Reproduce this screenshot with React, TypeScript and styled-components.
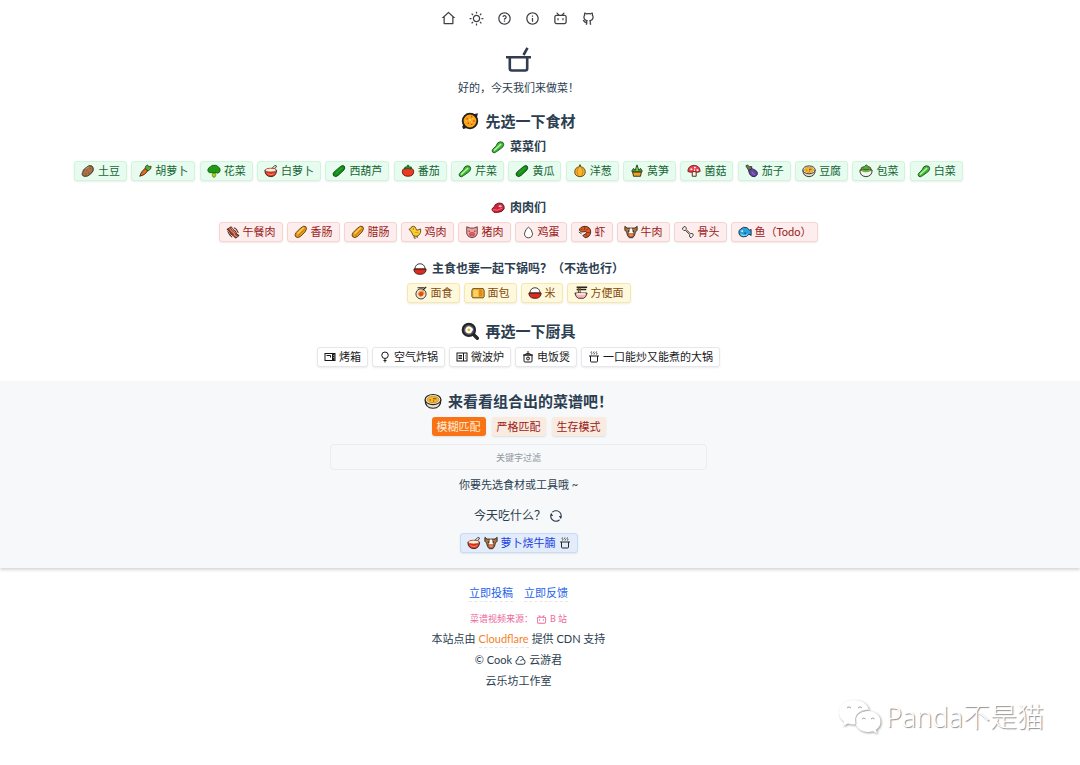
import React from 'react';
import styled, { createGlobalStyle, css } from 'styled-components';
import {
  RiHome2Line, RiSunLine, RiQuestionLine, RiInformationLine,
  RiBilibiliLine, RiGithubLine, RiRefreshLine, RiCloudLine,
} from 'react-icons/ri';

const Global = createGlobalStyle`
  * { box-sizing: border-box; }
  body {
    margin: 0;
    background: #fff;
    color: #2c3e50;
    font-family: Lato, "Noto Sans CJK SC", sans-serif;
    font-size: 11px;
    line-height: 20px;
  }
  h1, h2, p { margin: 0; }
  button, input { font: inherit; }
  svg { display: block; flex: none; }
`;

/* ---------- food drawings, 16 x 16 ---------- */
const K = '#2b2119';

const art: Record<string, React.ReactNode> = {
  potato: (<>
    <path d="M4 5.500 9 2q4-1 5 2.500t-3 7Q7 15 3.500 14T2 9.500q.3-2.300 2-4z" fill="#a9744a" stroke={K} />
    <path d="M6 7h1M10 5h1M8 10h1M5 11h1" stroke="#6b4226" />
    <path d="M5 5.500 9 3.200" stroke="#cf9c6f" />
  </>),
  carrot: (<>
    <path d="M2 14q1-5 6-9l3 3q-3 5-9 6z" fill="#f2701d" stroke={K} />
    <path d="M8 5q0-3 3-4l1 2 3-.5-.5 3-3 2.500z" fill="#4fae2b" stroke={K} strokeWidth=".8" />
    <path d="m5 9 1.500 1.500M7 7l1.500 1.500" stroke="#b94a0c" strokeWidth=".8" />
  </>),
  broccoli: (<>
    <path d="M6 9h4v4l-1 2H7l-1-2z" fill="#a8d816" stroke="#557d0c" strokeWidth=".8" />
    <path d="M3 10Q.5 9 1 6.500 1.500 4 4 3q2-2 4-1.500Q11 1 12.500 3 15 4 15 7q0 3-3 3.500l-2-1-2 1-2-1z" fill="#219b16" stroke="#11590d" />
  </>),
  bowlSpoon: (<>
    <path d="m8 6 4.500-4.500 2 1L11 7" fill="#ddd" stroke={K} strokeWidth=".9" />
    <path d="M1 7q0 7 7 7.500Q14 14 14.500 7z" fill="#e23a24" stroke={K} />
    <ellipse cx="7.700" cy="7" rx="6.200" ry="2.200" fill="#fff0d0" stroke="#8f2014" strokeWidth=".8" />
    <path d="M4 11q4 2.500 8 0" stroke="#ff8d70" fill="none" />
  </>),
  cucumber: (<>
    <path d="M2 13.500q-2-2 .5-4.500l7-6q3-2.500 4.500-.5t-.5 4.500L7 13q-3 2.500-5 .5z" fill="#129218" stroke="#133c13" />
    <path d="m4.500 10.500 7-6" stroke="#2fb82b" />
  </>),
  tomato: (<>
    <path d="M1.500 8.500Q2 4 8 4t6.500 4.500Q14.500 14 8 14T1.500 8.500z" fill="#ef391e" stroke="#52170c" />
    <path d="m8 5-4 1 .5-2.500L7 3V1.500h2V3l3 .5-1 2.500z" fill="#248b2c" stroke="#17491a" strokeWidth=".7" />
  </>),
  leafy: (<>
    <path d="M2 14q-1.500-1.500 0-3.500L6 6.500Q7 2.500 10.500 2q4 0 4 3t-3.500 5L6 13.500Q3.500 15.500 2 14z" fill="#3fbf35" stroke="#17441a" />
    <path d="m3.500 12 5-4.500 3-3" stroke="#c6f5ae" strokeWidth="1.600" />
    <path d="m6 13 5-4" stroke="#238b25" fill="none" strokeWidth=".8" />
  </>),
  onion: (<>
    <path d="M7.500 1h1v2Q14 4 14 9q0 5-6 5.500Q2 14 2 9q0-5 5.500-6z" fill="#f6b52d" stroke="#5e3b0c" />
    <path d="M6 4q-3 5 0 9.500M10 4q3 5 0 9.500" fill="none" stroke="#a86912" strokeWidth=".7" />
  </>),
  bamboo: (<>
    <path d="m2 8 2-3 2 2 2-6 2 6 2-2 2 3-2 3H4z" fill="#37a52c" stroke="#183c18" />
    <path d="M3 9h10l-1 5H4z" fill="#e7a32c" stroke={K} />
    <path d="M2.500 9.500h11" stroke="#8f5510" />
    <path d="M8 4v4" stroke="#cce858" />
  </>),
  mushroom: (<>
    <path d="M6 8h4.500v6H6z" fill="#fff0dc" stroke={K} />
    <path d="M1 8.500Q1 2 8 1.500q7 .5 7 7-3 2-7 0-4 2-7 0z" fill="#e8424a" stroke="#721b29" />
    <path d="M4 6h2M8 4h2M11 7h2M8 7h1" stroke="#fff" strokeWidth="1.800" />
  </>),
  eggplant: (<>
    <path d="m4 5 2-2q2 3 6 4 3 2 2 5-2 4-6 2Q4 12 4 5z" fill="#65459b" stroke="#2b1b48" />
    <path d="m1 2 2-1 2 2 3 0-1 3-3 1-2-3z" fill="#647d56" stroke={K} strokeWidth=".8" />
    <path d="M8 9q1 3 3 3" stroke="#a382d8" fill="none" />
  </>),
  stew: (<>
    <path d="M1 7q0 7 7 7.500Q15 14 15 7z" fill="#e6e1d5" stroke={K} />
    <ellipse cx="8" cy="6.700" rx="7" ry="4.500" fill="#f1ede2" stroke={K} />
    <ellipse cx="8" cy="6.700" rx="5.200" ry="3" fill="#f8b728" stroke="#c98a1c" strokeWidth=".7" />
    <path d="M5 7h1M8 6h3M8 8h1" stroke="#6c4816" />
  </>),
  salad: (<>
    <path d="m2 7 1-3 3-1 2-2 3 2 2 1 1 3z" fill="#48b33b" stroke="#174b1d" />
    <path d="M1 7q0 7 7 7.500Q15 14 15 7z" fill="#f4f4f0" stroke={K} />
    <path d="M3 7q5 3 10 0" stroke="#61ba41" strokeWidth="2" fill="none" />
    <path d="M10 4h2M5 5h1" stroke="#e8402b" strokeWidth="2" />
  </>),
  bacon: (<>
    <path d="m1 5 5-3 2 3 3 2 1 3 3 2-4 3-3-3-3-2-1-3z" fill="#a6402d" stroke={K} />
    <path d="m4 4 2 3 3 2 1 3 3 1.500M6 3l2 3 3 3" stroke="#ffb090" strokeWidth=".9" fill="none" />
    <path d="m2 7 2 4 3 3M9 3l3 2 2 4" stroke="#572419" fill="none" strokeWidth="1.200" />
  </>),
  baguette: (<>
    <path d="M2 13.500q-2-2 .5-5l5-5q4-3.500 6-1.500t-1 6l-5 5q-3.500 2.500-5.500.5z" fill="#e39a1f" stroke="#5e350a" />
    <path d="m4 10 7-7" stroke="#ffd45d" strokeWidth="1.500" />
    <path d="m5 12 7-7" stroke="#b8730f" strokeWidth=".8" />
  </>),
  chick: (<>
    <path d="m1 5 2-1q.5-2.500 3-2.500T9 4l1 2 4.500-1.500Q15 9 13 11q-2 2-4 2-4 0-4.500-4L3 6.500z" fill="#f9ce36" stroke="#63450b" />
    <path d="M5.500 4.500h1" stroke={K} />
    <path d="M7 12.500V15h2M10.500 12.500V15" stroke="#63450b" fill="none" />
    <path d="M8 8.500h4" stroke="#d3931a" />
  </>),
  pig: (<>
    <path d="m2 2 4 1.500h4L14 2v8q-1 4-6 4.500Q3 14 2 10z" fill="#f5a0a0" stroke="#5d2f30" />
    <path d="M4 7h1.500M10.500 7H12" stroke={K} />
    <rect x="5" y="8.500" width="6" height="4" rx="2" fill="#e46b70" stroke="#9a3e49" strokeWidth=".7" />
    <path d="M7 10v1M9 10v1" stroke="#6e2632" strokeWidth=".8" />
  </>),
  egg: (<path d="M8 1.500q4 2 5 8-.5 5-5 5t-5-5q1-6 5-8z" fill="#fff" stroke={K} />),
  shrimp: (<>
    <path d="M1.500 6Q2 2 8 1.500q6.500.5 6.500 6.500-.5 6-6.500 6.500L5.500 12 9 10q1.500-2 0-2.500L4 8z" fill="#df5a24" stroke={K} />
    <path d="m8 2-1 4M12 4 9 6M14 9l-4-.5M11 13l-2-2.500" stroke="#7c2513" strokeWidth=".9" />
    <path d="M4 5h1M1 8l3 2" stroke={K} />
  </>),
  cow: (<>
    <path d="m1 1.500 2.500 2h9l2.500-2V6l-2 2-1 4-2 2.500H6L4 12 3 8 1 6z" fill="#aa7445" stroke={K} />
    <path d="M7 4h2l1.500 6h-5z" fill="#fff" />
    <path d="M4.500 7H6M10 7h1.500" stroke={K} strokeWidth="1.300" />
    <path d="M5 10h6l-1 3.500H6z" fill="#f58a5c" stroke="#753f27" strokeWidth=".7" />
  </>),
  bone: (<path d="M2 5Q1 3 3 3q0-2 2-1 1.500 1 .8 3l5 5q2-1 3 .5t-1 2.500q-1 2.500-2.500 1-1-1-.3-3L5 6Q3 7 2 5z" fill="#fff" stroke={K} />),
  fish: (<>
    <path d="M1 8q0-2 2-3.500Q6 1.500 10 3q2 1 3 3l2-1v7l-2.500-1.500Q10 14 6 13.500 1 13 1 8z" fill="#2ba2dc" stroke="#102c42" />
    <path d="m7 8 3 1-2 2.500" fill="#10618c" />
    <path d="M4 7h1.500" stroke="#fff" strokeWidth="1.800" />
    <path d="M3 11q4 2 8 0" stroke="#a9eaff" fill="none" />
  </>),
  meat: (<>
    <path d="M1 9q3-2 4-5 4-3 8-1 3 3 2 6-2 4-8 4-5 1-6-4z" fill="#d41f38" stroke="#561321" />
    <ellipse cx="10.500" cy="6" rx="2.200" ry="1.700" fill="#ffbabc" stroke="#901c30" strokeWidth=".7" />
    <path d="M2 10q5 2 11-2" stroke="#ff7b83" fill="none" />
  </>),
  pasta: (<>
    <circle cx="8" cy="9" r="5.800" fill="#f1eee5" stroke={K} />
    <path d="M4 9q1-4 4-4 5 0 4 4l-3 3H6z" fill="#efb52b" />
    <path d="m5 9 3-3 3 2-1 3-3 1z" fill="#e34b24" />
    <path d="m4 2 8 0M10 5l4-4" stroke={K} strokeWidth="1.300" />
  </>),
  bread: (<>
    <path d="M2 3h12l1 2v7l-1 1.500H2L1 12V5z" fill="#f6ba3a" stroke="#55390c" />
    <path d="M9 4h4v8H9z" fill="#e28a16" />
    <path d="M3 5h5v7H3z" fill="#ffd464" />
  </>),
  rice: (<>
    <path d="M2 8Q3 2 8 2t6 6z" fill="#fff" stroke={K} />
    <path d="M1 8h14q0 5-5 6H6q-5-1-5-6z" fill="#df2a20" stroke={K} />
    <path d="M2 8.500h12" stroke="#8e1714" />
  </>),
  ramen: (<>
    <path d="M3 1.500h12M3 4h11" stroke={K} strokeWidth="1.800" />
    <path d="M5 2v6M7 2v6" stroke="#6b5a2a" strokeWidth="1.300" />
    <path d="M1 8h14q-1 5-4 6H5Q2 13 1 8z" fill="#f9b6bd" stroke={K} />
    <path d="M3 9h10" stroke="#fff" strokeWidth="1.500" />
  </>),
  paella: (<>
    <path d="m1 13 2-3 3 4-4 1zM11 2l4-1-1 5z" fill="#222" />
    <circle cx="8" cy="8" r="6.500" fill="#f9a51a" stroke="#211e1b" strokeWidth="1.600" />
    <path d="M5 6h1M9 4h1M11 8h1M6 10h1M9 11h1" stroke="#dd391c" strokeWidth="1.200" />
    <path d="M7 7h2M4 8h1M10 6h1M9 9h1" stroke="#ffe36c" />
  </>),
  pan: (<>
    <path d="m10.500 10.500 4 4" stroke="#252729" strokeWidth="3" strokeLinecap="round" />
    <circle cx="7" cy="7" r="5.500" fill="#55585b" stroke="#222528" strokeWidth="1.800" />
    <path d="M4 6q1-3 4-2 4 2 2 4-1 3-4 2-3-1-2-4z" fill="#fff" />
    <circle cx="7" cy="7" r="1.300" fill="#ffb11b" />
  </>),
};

/* ---------- cookware line drawings, 24 x 24 ---------- */
const lines: Record<string, React.ReactNode> = {
  oven: (<>
    <rect x="2" y="5" width="20" height="14" />
    <path d="M5 9h8v4" />
    <path d="M18.500 5v14" strokeWidth="5" />
    <path d="M18 9h1M18 13h1" stroke="#fff" />
  </>),
  airFryer: (<><circle cx="12" cy="8.500" r="6.500" /><path d="M12 15v8M9 19h6" /></>),
  microwave: (<>
    <rect x="2" y="4" width="20" height="16" />
    <path d="M15 4v16M5 9h7M5 12h7M5 15h7M18 9h1M18 12h1M18 15h1" />
  </>),
  riceCooker: (<>
    <path d="M4 8h16v12q0 2-2 2H6q-2 0-2-2zM2 8h20M6 8q0-3 6-3t6 3M10 2h4" />
    <circle cx="12" cy="15" r="3" /><path d="m12 15 2-2" />
  </>),
  potSteam: (<>
    <path d="M2 10h20M5 10v10q0 2 2 2h10q2 0 2-2V10" />
    <path d="M7 1q-2 1.500 0 3t0 3M12 1q-2 1.500 0 3t0 3M17 1q-2 1.500 0 3t0 3" strokeWidth="1.600" />
  </>),
};

const Food = ({ name, size = 14 }: { name: string; size?: number }) => (
  <svg width={size} height={size} viewBox="0 0 16 16" fill="none" strokeLinejoin="round" aria-hidden="true">{art[name]}</svg>
);
const Line = ({ name }: { name: string }) => (
  <svg width="12" height="12" viewBox="0 0 24 24" fill="none" stroke="currentColor" strokeWidth="2" aria-hidden="true">{lines[name]}</svg>
);

/* ---------- layout ---------- */
const Page = styled.div`
  position: relative;
  min-height: 100vh;
`;

const column = css`
  display: flex;
  flex-direction: column;
  align-items: center;
  padding-right: 43px;
`;

const Main = styled.main`
  ${column}
  padding-top: 11px;
  padding-bottom: 14px;
`;

const Nav = styled.nav`
  display: flex;
  gap: 13px;
  margin-bottom: 21px;
  a { color: #3f3f46; }
`;

const Intro = styled.p`
  margin: 6px 0 11px;
`;

const Title = styled.h1`
  display: flex;
  align-items: center;
  gap: 6px;
  font-size: 15px;
  line-height: 24px;
  font-weight: 700;
  margin-bottom: 4px;
`;

const Subtitle = styled.h2`
  display: flex;
  align-items: center;
  gap: 5px;
  font-size: 12px;
  line-height: 18px;
  font-weight: 700;
  margin: 1px 0 5px;
`;

const Row = styled.div<{ $after: number; $gap?: number; $spread?: boolean }>`
  display: flex;
  flex-wrap: wrap;
  justify-content: center;
  gap: ${p => p.$gap ?? 4}px;
  margin-bottom: ${p => p.$after}px;
  ${p => p.$spread && css`
    width: 100%;
    max-width: 889px;
    @media (min-width: 940px) { justify-content: space-between; }
  `}
`;

const tones = {
  green: ['#e7fbef', '#cff6dd', '#166534'],
  red: ['#fdeded', '#f8d3d3', '#991b1b'],
  yellow: ['#fef8dc', '#f7e8aa', '#854d0e'],
  plain: ['#ffffff', '#e5e7eb', '#18181b'],
  blue: ['#e2ecfa', '#c6dbf7', '#1d3fe0'],
};
type Tone = keyof typeof tones;

const chip = css<{ $tone: Tone }>`
  display: flex;
  align-items: center;
  gap: 3px;
  height: 20px;
  padding: 0 6px;
  border: 1px solid ${p => tones[p.$tone][1]};
  border-radius: 3px;
  background: ${p => tones[p.$tone][0]};
  color: ${p => tones[p.$tone][2]};
  box-shadow: 0 1px 2px rgba(0, 0, 0, 0.08);
  line-height: 18px;
  white-space: nowrap;
`;

const Chip = styled.button<{ $tone: Tone }>`
  ${chip}
  cursor: pointer;
`;

const Dish = styled.a<{ $tone: Tone }>`
  ${chip}
  text-decoration: none;
  margin-top: 7px;
  svg:last-child { color: #27272a; }
`;

const Band = styled.section`
  ${column}
  padding-top: 8px;
  padding-bottom: 15px;
  background: #f6f8fa;
  box-shadow: 0 2px 3px rgba(0, 0, 0, 0.16);
`;

const Mode = styled.button<{ $active?: boolean }>`
  height: 19px;
  padding: 0 5px;
  border: 0;
  border-radius: 3px;
  background: ${p => (p.$active ? '#f97316' : '#f9ebe0')};
  color: ${p => (p.$active ? '#ffedd5' : '#991b1b')};
  box-shadow: 0 1px 2px rgba(0, 0, 0, 0.1);
  line-height: 19px;
  cursor: pointer;
`;

const Filter = styled.input`
  width: 100%;
  max-width: 377px;
  height: 26px;
  border: 1px solid #ebedf0;
  border-radius: 4px;
  background: transparent;
  color: inherit;
  font-size: 9px;
  text-align: center;
  margin-bottom: 5px;
  &::placeholder { color: #9299a3; opacity: 1; }
`;

const Today = styled.div`
  display: flex;
  align-items: center;
  gap: 3px;
  margin-top: 11px;
  font-size: 12px;
`;

const Refresh = styled.button`
  padding: 0;
  border: 0;
  background: none;
  color: inherit;
  cursor: pointer;
`;

const Footer = styled.footer`
  ${column}
  padding-top: 16px;
  padding-bottom: 15px;
`;

const Links = styled.div`
  display: flex;
  gap: 11px;
  margin-bottom: 7px;
`;

const Link = styled.a<{ $color: string }>`
  color: ${p => p.$color};
  line-height: 17px;
  text-decoration: none;
  border-bottom: 1px dashed #e5e7eb;
`;

const Source = styled.a`
  display: flex;
  align-items: center;
  gap: 3px;
  color: #ec6a9c;
  font-size: 9px;
  text-decoration: none;
`;

const Note = styled.p`
  display: flex;
  align-items: center;
  gap: 3px;
  margin-bottom: 1px;
`;

const Watermark = styled.div`
  position: absolute;
  right: 36px;
  bottom: 29px;
  display: flex;
  align-items: center;
  gap: 5px;
  color: #fff;
  font-family: "Noto Sans", "Noto Sans CJK SC", sans-serif;
  font-size: 27px;
  font-weight: 300;
  line-height: 38px;
  text-shadow: 1px 1px 1px #8c8c8c;
  svg { filter: drop-shadow(1px 1px 1px #999); }
`;

const vegetables = [
  ['potato', '土豆'], ['carrot', '胡萝卜'], ['broccoli', '花菜'], ['bowlSpoon', '白萝卜'],
  ['cucumber', '西葫芦'], ['tomato', '番茄'], ['leafy', '芹菜'], ['cucumber', '黄瓜'],
  ['onion', '洋葱'], ['bamboo', '莴笋'], ['mushroom', '菌菇'], ['eggplant', '茄子'],
  ['stew', '豆腐'], ['salad', '包菜'], ['leafy', '白菜'],
];
const meats = [
  ['bacon', '午餐肉'], ['baguette', '香肠'], ['baguette', '腊肠'], ['chick', '鸡肉'], ['pig', '猪肉'],
  ['egg', '鸡蛋'], ['shrimp', '虾'], ['cow', '牛肉'], ['bone', '骨头'], ['fish', '鱼（Todo）'],
];
const staples = [['pasta', '面食'], ['bread', '面包'], ['rice', '米'], ['ramen', '方便面']];
const tools = [
  ['oven', '烤箱'], ['airFryer', '空气炸锅'], ['microwave', '微波炉'],
  ['riceCooker', '电饭煲'], ['potSteam', '一口能炒又能煮的大锅'],
];

const Foods = ({ items, tone, after, spread }: { items: string[][]; tone: Tone; after: number; spread?: boolean }) => (
  <Row $after={after} $spread={spread}>
    {items.map(([icon, label]) => (
      <Chip key={label} type="button" $tone={tone}>
        <Food name={icon} size={icon === 'egg' ? 13 : 14} />{label}
      </Chip>
    ))}
  </Row>
);

export default function App() {
  return (
    <Page>
      <Global />
      <Main>
        <Nav>
          <a href="#home" aria-label="首页"><RiHome2Line size={15} /></a>
          <a href="#theme" aria-label="主题"><RiSunLine size={15} /></a>
          <a href="#help" aria-label="帮助"><RiQuestionLine size={15} /></a>
          <a href="#about" aria-label="关于"><RiInformationLine size={15} /></a>
          <a href="#bilibili" aria-label="哔哩哔哩"><RiBilibiliLine size={15} /></a>
          <a href="#github" aria-label="GitHub"><RiGithubLine size={15} /></a>
        </Nav>
        <svg width="25" height="25" viewBox="0 0 25 25" fill="none" stroke="#323c50" strokeWidth="2.600" aria-hidden="true">
          <path d="M0 10.300h25M3.800 10v11.500q0 2 2 2h13.400q2 0 2-2V10M17.500 8 21.500.8" />
        </svg>
        <Intro>好的，今天我们来做菜！</Intro>

        <Title><Food name="paella" size={18} />先选一下食材</Title>
        <Subtitle><Food name="leafy" />菜菜们</Subtitle>
        <Foods items={vegetables} tone="green" after={17} spread />
        <Subtitle><Food name="meat" />肉肉们</Subtitle>
        <Foods items={meats} tone="red" after={17} />
        <Subtitle><Food name="rice" />主食也要一起下锅吗？（不选也行）</Subtitle>
        <Foods items={staples} tone="yellow" after={16} />

        <Title><Food name="pan" size={18} />再选一下厨具</Title>
        <Row $after={0}>
          {tools.map(([icon, label]) => (
            <Chip key={label} type="button" $tone="plain"><Line name={icon} />{label}</Chip>
          ))}
        </Row>
      </Main>

      <Band>
        <Title><Food name="stew" size={18} />来看看组合出的菜谱吧！</Title>
        <Row $after={8} $gap={6}>
          <Mode type="button" $active>模糊匹配</Mode>
          <Mode type="button">严格匹配</Mode>
          <Mode type="button">生存模式</Mode>
        </Row>
        <Filter type="text" placeholder="关键字过滤" aria-label="关键字过滤" />
        <p>你要先选食材或工具哦 ~</p>
        <Today>
          今天吃什么？
          <Refresh type="button" aria-label="换一个"><RiRefreshLine size={14} /></Refresh>
        </Today>
        <Dish href="#dish" $tone="blue">
          <Food name="bowlSpoon" /><Food name="cow" />萝卜烧牛腩<Line name="potSteam" />
        </Dish>
      </Band>

      <Footer>
        <Links>
          <Link href="#submit" $color="#2563eb">立即投稿</Link>
          <Link href="#feedback" $color="#2563eb">立即反馈</Link>
        </Links>
        <Source href="#source">菜谱视频来源：<RiBilibiliLine size={11} />B 站</Source>
        <Note>本站点由 <Link href="#cloudflare" $color="#f6821f">Cloudflare</Link> 提供 CDN 支持</Note>
        <Note>© Cook <RiCloudLine size={11} /> 云游君</Note>
        <Note>云乐坊工作室</Note>
      </Footer>

      <Watermark>
        <svg width="43" height="36" viewBox="0 0 43 36" fill="#fff" aria-hidden="true">
          <path d="M16 1C7 1 1 6.500 1 13.500c0 4 2 7 5 9L5 27l5-2.500q4 1.200 8 .8Q17 12 31 11 28 1 16 1z" />
          <path d="M30 12c-7 0-12.500 4.500-12.500 10.500S23 33 30 33q2.500 0 5-.8l4 2.300-1-3.700c3-2 4.500-5 4.500-8.300C42.500 16.500 37 12 30 12z" />
          <g fill="none" stroke="#a0a0a0">
            <path d="M9 9q2-2.500 4 0M20 9q2-2.500 4 0M24 20q2-2 3.500 0M33 20q2-2 3.500 0" />
            <path d="M18 25q-3-13 12-14" stroke="#b5b5b5" />
          </g>
        </svg>
        Panda不是猫
      </Watermark>
    </Page>
  );
}
